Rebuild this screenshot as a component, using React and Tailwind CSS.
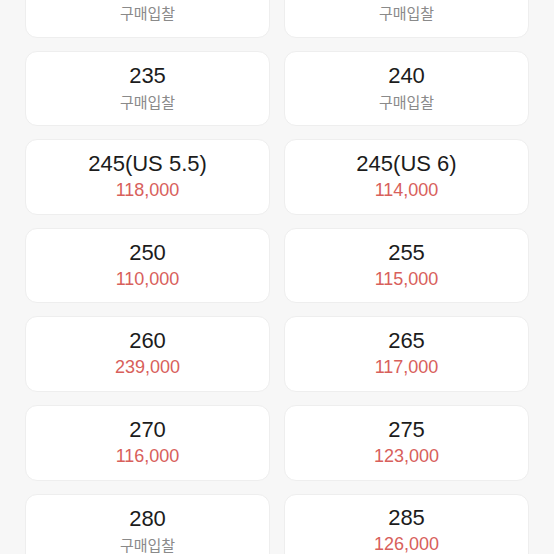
import React from "react";

const rows = [
  [{ s: "", p: null }, { s: "", p: null }],
  [{ s: "235", p: null }, { s: "240", p: null }],
  [{ s: "245(US 5.5)", p: "118,000" }, { s: "245(US 6)", p: "114,000" }],
  [{ s: "250", p: "110,000" }, { s: "255", p: "115,000" }],
  [{ s: "260", p: "239,000" }, { s: "265", p: "117,000" }],
  [{ s: "270", p: "116,000" }, { s: "275", p: "123,000" }],
  [{ s: "280", p: null }, { s: "285", p: "126,000" }],
];

function Card({ s, p }) {
  return (
    <div className="h-[75.6px] rounded-[12px] bg-white border border-[#eeeeee] flex flex-col items-center justify-center">
      <div className="h-[26px] text-[22px] leading-[26px] text-[#1c1c1c]" style={{ fontFamily: '"Liberation Sans", Arial, sans-serif' }}>
        {s}
      </div>
      {p ? (
        <div className="text-[18px] leading-[26px] text-[#d8605b]" style={{ fontFamily: '"Liberation Sans", Arial, sans-serif' }}>
          {p}
        </div>
      ) : (
        <div className="text-[15px] leading-[25px] text-[#8a8a8a]" style={{ fontFamily: '"Noto Sans CJK KR", "Noto Sans", sans-serif' }}>
          구매입찰
        </div>
      )}
    </div>
  );
}

export default function App() {
  return (
    <div className="w-[554px] h-[554px] overflow-hidden bg-[#f7f7f7]">
      <div className="-mt-[38px] px-[25px] grid grid-cols-2 gap-x-[14px] gap-y-[13px]">
        {rows.flat().map((c, i) => (
          <Card key={i} s={c.s} p={c.p} />
        ))}
      </div>
    </div>
  );
}
